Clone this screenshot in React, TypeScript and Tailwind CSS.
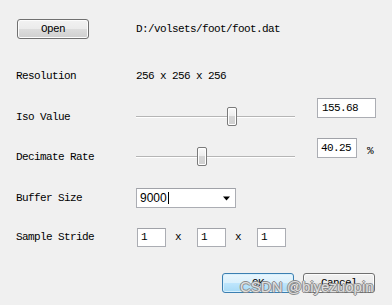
const label = "font-['Liberation_Mono',monospace] text-[11px] tracking-[-0.6px] leading-none";
const winBtn =
  "h-[20px] w-[72px] rounded-[3px] border border-[#707070] bg-[linear-gradient(#f2f2f2_0%,#ebebeb_50%,#dddddd_50%,#cfcfcf_100%)] shadow-[inset_0_0_0_1px_#fcfcfc] flex items-center justify-center";
const box = "border border-[#abadb3] border-t-[#a0a2a8] bg-white flex items-center";

function Slider({ pos }: { pos: number }) {
  return (
    <div className="relative w-[159px] h-[20px]">
      <div className="absolute left-0 right-0 top-[9px] h-[1px] bg-[#b5b5b5]" />
      <div className="absolute left-0 right-0 top-[10px] h-[1px] bg-white" />
      <div
        className="absolute top-0 h-[19px] w-[10px] rounded-[2px] border border-[#7a7a7a] bg-[linear-gradient(#fafafa_0%,#ececec_50%,#d6d6d6_50%,#d0d0d0_100%)] shadow-[inset_0_0_0_1px_#ffffff]"
        style={{ left: pos }}
      />
    </div>
  );
}

function Small({ v }: { v: string }) {
  return (
    <div className={`${box} w-[29px] h-[19px] pl-[3px]`}>
      <span className={label}>{v}</span>
    </div>
  );
}

export default function App() {
  return (
    <div className="relative w-[392px] h-[305px] overflow-hidden bg-[#f0f0f0] text-black">
      <div className="pt-[19px] pl-[16px]">
        <div className="flex items-center h-[20px]">
          <div className="w-[120px]">
            <div className={`${winBtn} ml-[1px]`}>
              <span className={label}>Open</span>
            </div>
          </div>
          <span className={label}>D:/volsets/foot/foot.dat</span>
        </div>

        <div className="mt-[27px] flex items-center h-[20px]">
          <span className={`${label} w-[120px]`}>Resolution</span>
          <span className={label}>256 x 256 x 256</span>
        </div>

        <div className="mt-[12px] flex items-start h-[29px]">
          <div className="mt-[9px] flex items-center h-[20px]">
            <span className={`${label} w-[120px]`}>Iso Value</span>
            <Slider pos={91} />
          </div>
          <div className={`${box} ml-[22px] w-[59px] h-[20px] pl-[4px]`}>
            <span className={label}>155.68</span>
          </div>
        </div>

        <div className="mt-[11px] flex items-start h-[29px]">
          <div className="mt-[9px] flex items-center h-[20px]">
            <span className={`${label} w-[120px]`}>Decimate Rate</span>
            <Slider pos={61} />
          </div>
          <div className={`${box} ml-[22px] w-[40px] h-[20px] pl-[3px]`}>
            <span className={label}>40.25</span>
          </div>
          <span className={`${label} ml-[10px] mt-[8px] text-[10px]`}>%</span>
        </div>

        <div className="mt-[21px] flex items-center h-[20px]">
          <span className={`${label} w-[120px]`}>Buffer Size</span>
          <div className={`${box} w-[100px] h-[20px] pl-[3px] pr-[3px] justify-between`}>
            <span className="flex items-center font-['Liberation_Sans',sans-serif] text-[12px] leading-none">
              9000
              <span className="ml-[1px] inline-block w-[1px] h-[12px] bg-black" />
            </span>
            <svg width="9" height="5" viewBox="0 0 9 5" className="mr-[1px]">
              <path d="M1 0.5h7L4.5 4.5z" fill="#000" />
            </svg>
          </div>
        </div>

        <div className="mt-[20px] flex items-center h-[19px]">
          <span className={`${label} w-[121px]`}>Sample Stride</span>
          <Small v="1" />
          <span className={`${label} ml-[9px] mr-[16px]`}>x</span>
          <Small v="1" />
          <span className={`${label} ml-[9px] mr-[16px]`}>x</span>
          <Small v="1" />
        </div>

        <div className="mt-[26px] flex justify-end gap-[9px] pr-[17px]">
          <div className="h-[20px] w-[72px] rounded-[3px] border border-[#3c7fb1] bg-[linear-gradient(#eaf6fd_0%,#d9f0fc_50%,#bee6fd_50%,#a7d9f5_100%)] shadow-[inset_0_0_0_1px_#d8f0fd] flex items-center justify-center">
            <span className={label}>OK</span>
          </div>
          <div className={winBtn}>
            <span className={label}>Cancel</span>
          </div>
        </div>
      </div>

      <div className="absolute left-[240px] top-[278px] font-['Liberation_Sans',sans-serif] text-[15px] leading-[18px] text-[#eeeeee]/85 [text-shadow:1px_0_0_#8c8c8c,-1px_0_0_#8c8c8c,0_1px_0_#8c8c8c,0_-1px_0_#8c8c8c]">
        CSDN @biyezuopin
      </div>
    </div>
  );
}
